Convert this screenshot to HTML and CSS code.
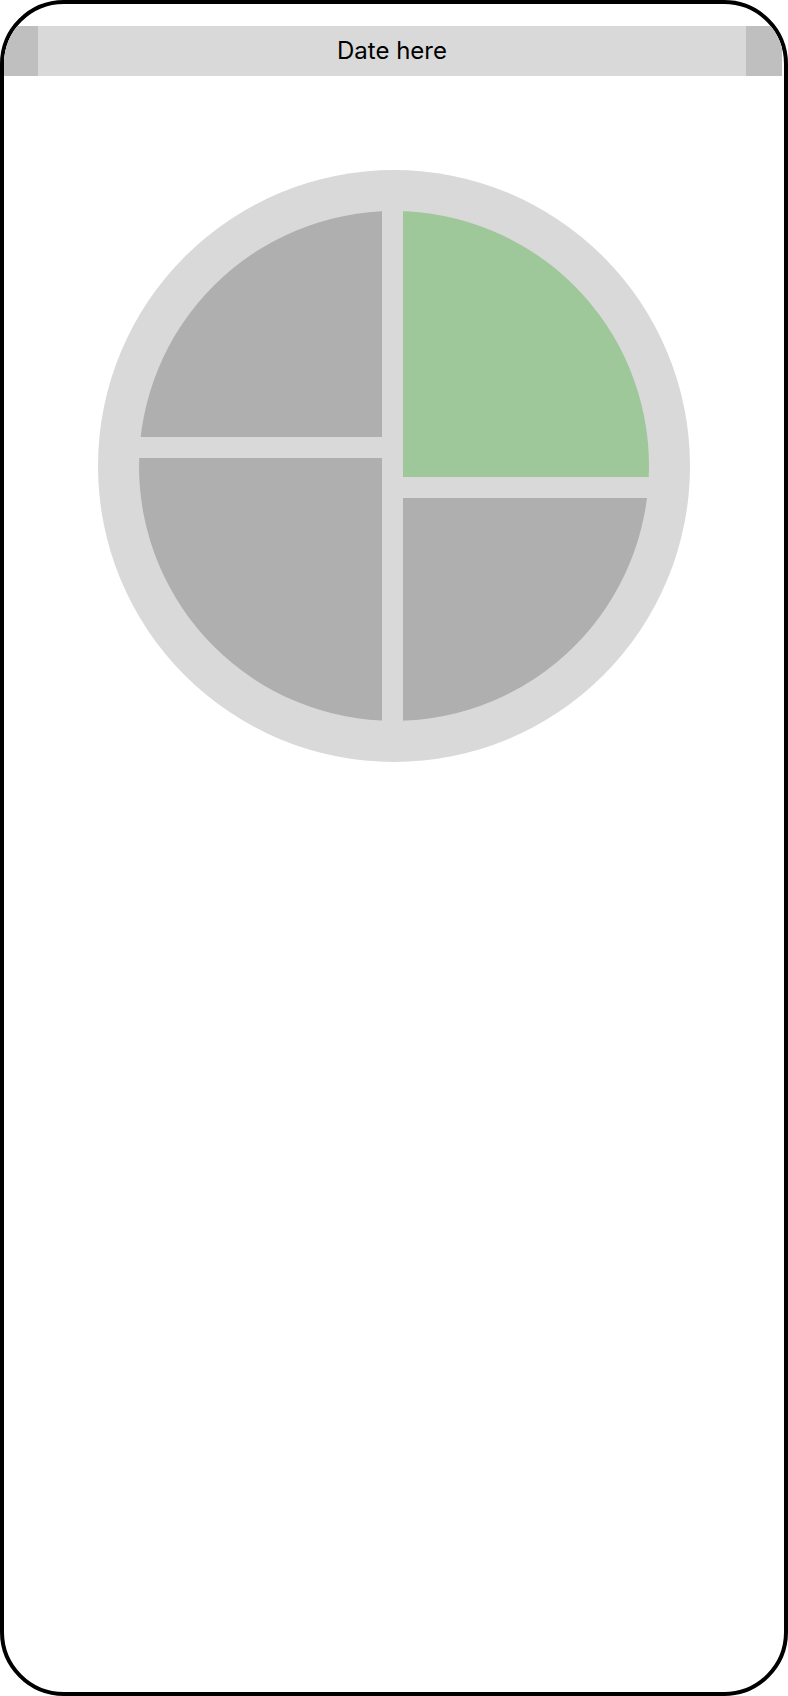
FILE: index.html
```html
<!DOCTYPE html>
<html lang="en">
<head>
    <meta charset="UTF-8">
    <meta name="viewport" content="width=device-width, initial-scale=1.0">
    <title>Day Tracker</title>
    <link rel="stylesheet" href="styles.css">
</head>
<body>
    <div class="phone">
        <div class="date-bar">
            <div class="date-nav prev"></div>
            <div class="date-label">Date here</div>
            <div class="date-nav next"></div>
        </div>

        <div class="dial">
            <div class="dial-face">
                <div class="dial-column">
                    <div class="segment seg-top-left"></div>
                    <div class="segment seg-bottom-left"></div>
                </div>
                <div class="dial-column">
                    <div class="segment done seg-top-right"></div>
                    <div class="segment seg-bottom-right"></div>
                </div>
            </div>
        </div>
    </div>
</body>
</html>
```

FILE: styles.css
```css
body {
    margin: 0;
    font-family: Inter, "Noto Sans", Arial, sans-serif;
    background-color: #ffffff;
}
.phone {
    box-sizing: border-box;
    width: 788px;
    height: 1696px;
    border: 4px solid #000;
    border-radius: 64px;
    overflow: hidden;  /* clips the date bar at the rounded corners */
    background-color: #fff;
}
.date-bar {
    display: flex;
    width: 778px;
    height: 50px;
    margin-top: 22px;
    background-color: #d9d9d9;
}
.date-nav {
    background-color: #bfbfbf;
}
.prev {
    width: 34px;
}
.next {
    width: 36px;
}
.date-label {
    flex: 1;
    text-align: center;
    line-height: 50px;
    font-size: 24px;
    color: #000;
}
.dial {
    box-sizing: border-box;
    width: 592px;
    height: 592px;
    margin: 94px auto 0;
    padding: 41px;
    border-radius: 50%;
    background-color: #d9d9d9;
}
.dial-face {
    display: grid;
    grid-template-columns: 243px 246px;
    column-gap: 21px;
    width: 510px;
    height: 510px;
    border-radius: 50%;
    overflow: hidden;
}
.dial-column {
    display: flex;
    flex-direction: column;
    gap: 21px;
}
.segment {
    background-color: #afafaf;
}
.seg-top-left {
    height: 226px;
}
.seg-top-right {
    height: 266px;
}
.seg-bottom-left, .seg-bottom-right {
    flex: 1;
}
.done {
    background-color: #9ec899;
}
```
